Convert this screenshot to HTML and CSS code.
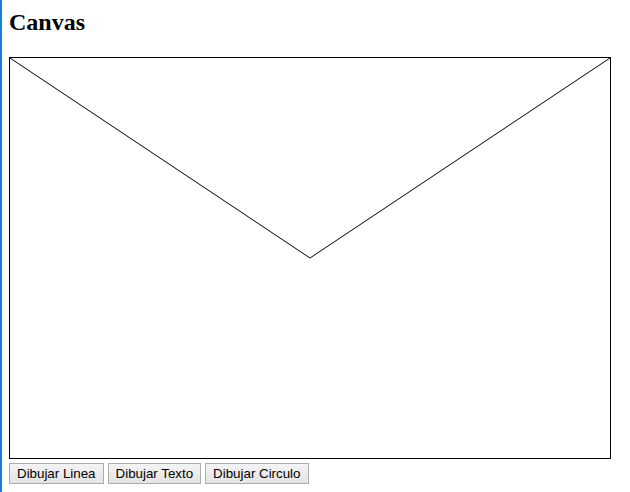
FILE: index.html
```html
<!DOCTYPE html>
<html lang="es">
<head>
<meta charset="utf-8">
<title>Canvas</title>
<link rel="stylesheet" href="styles.css">
</head>
<body>
<div class="edge"></div>
<h2 class="title">Canvas</h2>
<div class="board">
  <svg class="drawing" width="600" height="400" viewBox="0 0 600 400">
    <polyline points="0,0 300,200 600,0" fill="none" stroke="#000" stroke-width="1"/>
  </svg>
</div>
<div class="controls">
  <button class="btn" type="button">Dibujar Linea</button>
  <button class="btn" type="button">Dibujar Texto</button>
  <button class="btn" type="button">Dibujar Circulo</button>
</div>
</body>
</html>
```

FILE: styles.css
```css
html, body {
  background: #fff;
}
body {
  margin: 8px 8px 8px 9px;
  font-family: "Liberation Serif", "Times New Roman", serif;
}
.edge {
  position: fixed;
  left: 0;
  top: 0;
  width: 2px;
  height: 100%;
  background: #1580dc;
}
.title {
  margin: 0 0 21px;
  font-size: 24px;
  line-height: 28px;
  font-weight: bold;
  color: #000;
}
.board {
  width: 600px;
  height: 400px;
  border: 1px solid #000;
}
.drawing {
  display: block;
}
.controls {
  display: flex;
  gap: 4px;
  margin-top: 4px;
}
.btn {
  font-family: "Liberation Sans", Arial, sans-serif;
  font-size: 13.33px;
  line-height: 15px;
  height: 21px;
  padding: 2px 7px;
  border: 1px solid #adadad;
  border-radius: 0;
  background: linear-gradient(#f4f4f4, #e4e4e4);
  color: #000;
}
```
